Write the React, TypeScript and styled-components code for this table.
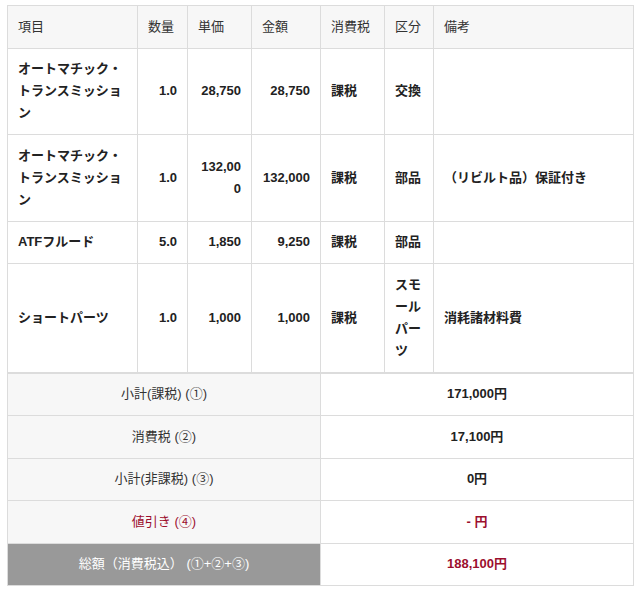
import * as React from "react";
import styled, { createGlobalStyle } from "styled-components";

const FONT = `"Liberation Sans", "Noto Sans CJK JP", sans-serif`;
const BORDER = "#dcdcdc";
const RED = "#9c0f2e";

interface IItem {
  name: string;
  qty: string;
  unit: string;
  amount: string;
  tax: string;
  kind: string;
  note: string;
}

const ITEMS: IItem[] = [
  { name: "オートマチック・トランスミッション", qty: "1.0", unit: "28,750", amount: "28,750", tax: "課税", kind: "交換", note: "" },
  { name: "オートマチック・トランスミッション", qty: "1.0", unit: "132,000", amount: "132,000", tax: "課税", kind: "部品", note: "（リビルト品）保証付き" },
  { name: "ATFフルード", qty: "5.0", unit: "1,850", amount: "9,250", tax: "課税", kind: "部品", note: "" },
  { name: "ショートパーツ", qty: "1.0", unit: "1,000", amount: "1,000", tax: "課税", kind: "スモールパーツ", note: "消耗諸材料費" },
];

const SUMMARY = [
  { label: "小計(課税) (①)", value: "171,000円" },
  { label: "消費税 (②)", value: "17,100円" },
  { label: "小計(非課税) (③)", value: "0円" },
  { label: "値引き (④)", value: "- 円", red: true },
  { label: "総額（消費税込） (①+②+③)", value: "188,100円", total: true },
];

const COLS = [130, 50, 64, 69, 64, 49, 200];

const App = () => {
  return (
    <Page>
      <GlobalStyle />
      <Table>
        <colgroup>
          {COLS.map((w, i) => (
            <col key={i} style={{ width: w }} />
          ))}
        </colgroup>
        <thead>
          <tr>
            <Th>項目</Th>
            <Th>数量</Th>
            <Th>単価</Th>
            <Th>金額</Th>
            <Th>消費税</Th>
            <Th>区分</Th>
            <Th>備考</Th>
          </tr>
        </thead>
        <tbody>
          {ITEMS.map((item, indx) => (
            <tr key={indx}>
              <Td>{item.name}</Td>
              <Td $num>{item.qty}</Td>
              <Td $num>{item.unit}</Td>
              <Td $num>{item.amount}</Td>
              <Td>{item.tax}</Td>
              <Td>{item.kind}</Td>
              <Td>{item.note}</Td>
            </tr>
          ))}
        </tbody>
      </Table>
      <Table>
        <colgroup>
          <col style={{ width: 313 }} />
          <col style={{ width: 313 }} />
        </colgroup>
        <tbody>
          {SUMMARY.map((row, indx) => (
            <tr key={indx}>
              <Label $red={row.red} $total={row.total}>
                {row.label}
              </Label>
              <Value $red={row.red || row.total}>{row.value}</Value>
            </tr>
          ))}
        </tbody>
      </Table>
    </Page>
  );
};

export default App;

const GlobalStyle = createGlobalStyle`
  body {
    margin: 0;
    background: #fff;
    font-family: ${FONT};
  }
`;

const Page = styled.div`
  padding: 5px 7px;
  width: 626px;
  color: #222;
  font-size: 13px;
`;

const Table = styled.table`
  width: 626px;
  table-layout: fixed;
  border-collapse: collapse;
  border: 1px solid ${BORDER};
`;

const Cell = styled.td`
  border: 1px solid ${BORDER};
  padding: 9.75px 10px;
  line-height: 22px;
  vertical-align: middle;
  word-break: break-all;
`;

const Th = styled(Cell).attrs({ as: "th" })`
  background: #f7f7f7;
  font-weight: normal;
  text-align: left;
  color: #333;
`;

const Td = styled(Cell)<{ $num?: boolean }>`
  font-weight: bold;
  text-align: ${(p) => (p.$num ? "right" : "left")};
`;

const Label = styled(Cell)<{ $red?: boolean; $total?: boolean }>`
  text-align: center;
  font-weight: normal;
  background: ${(p) => (p.$total ? "#999999" : "#f7f7f7")};
  color: ${(p) => (p.$total ? "#fff" : p.$red ? RED : "#333")};
`;

const Value = styled(Cell)<{ $red?: boolean }>`
  text-align: center;
  font-weight: bold;
  background: #fff;
  color: ${(p) => (p.$red ? RED : "#222")};
`;
